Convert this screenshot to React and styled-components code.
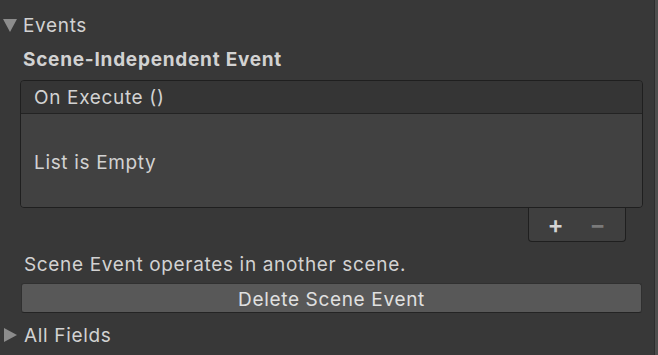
import React from "react";
import styled, { createGlobalStyle } from "styled-components";

const GlobalStyle = createGlobalStyle`
    html, body {
        margin: 0;
        padding: 0;
        background: #383838;
    }
    body {
        font-family: Inter, "Noto Sans", "Liberation Sans", sans-serif;
        font-size: 19px;
        letter-spacing: 0.66px;
        color: #d2d2d2;
    }
`

// inspector-like panel, dark skin
const Inspector = styled.div`
    display: flex;
    width: 658px;
    height: 355px;
    overflow: hidden;
    background: #383838;
`

const Content = styled.div`
    flex: 1;
    display: flex;
    flex-direction: column;
`

const ScrollEdge = styled.div`
    width: 3px;
    border-left: 1px solid #2e2e2e;
    background: #4e4e4e;
`

const FoldoutRow = styled.div`
    display: flex;
    align-items: center;
    height: 22px;
    margin-top: ${props => props.top}px;
    padding-left: 3px;
`

const Arrow = styled.span`
    width: 0;
    height: 0;
    margin-right: 6px;
    ${props => props.open ? `
        border-left: 7px solid transparent;
        border-right: 7px solid transparent;
        border-top: 13px solid #8c8c8c;
        margin-top: 1px;
    ` : `
        margin-left: 1px;
        margin-right: 7px;
        border-top: 7px solid transparent;
        border-bottom: 7px solid transparent;
        border-left: 13px solid #8c8c8c;
    `}
`

const Heading = styled.div`
    height: 22px;
    line-height: 22px;
    margin-top: 13px;
    padding-left: 23px;
    font-weight: 700;
    letter-spacing: 0.75px;
`

const EventBox = styled.div`
    margin: 9px 11px 0 20px;
    border: 1px solid #1f1f1f;
    border-radius: 4px;
    overflow: hidden;
`

const EventHeader = styled.div`
    height: 32px;
    line-height: 33px;
    padding-left: 13px;
    background: #353535;
    border-bottom: 1px solid #232323;
`

const EventBody = styled.div`
    height: 93px;
    display: flex;
    align-items: center;
    padding: 3px 0 0 13px;
    box-sizing: border-box;
    background: #414141;
`

const FooterWrap = styled.div`
    display: flex;
    justify-content: flex-end;
    margin-right: 28px;
`

const Footer = styled.div`
    display: flex;
    align-items: center;
    justify-content: space-around;
    width: 98px;
    height: 34px;
    padding: 0 6px;
    box-sizing: border-box;
    background: #3f3f3f;
    border: 1px solid #1f1f1f;
    border-top: none;
    border-radius: 0 0 4px 4px;
`

const FooterButton = styled.span`
    font-size: 24px;
    font-weight: 600;
    line-height: 1;
    color: ${props => props.disabled ? "#7a7a7a" : "#d4d4d4"};
`

const Note = styled.div`
    height: 22px;
    line-height: 22px;
    margin-top: 12px;
    padding-left: 24px;
`

const Button = styled.div`
    margin: 7px 12px 0 21px;
    height: 28px;
    line-height: 31px;
    text-align: center;
    background: #585858;
    border: 1px solid #303030;
    border-bottom-color: #242424;
    border-radius: 3px;
    color: #e0e0e0;
`

const App = () => {
    return (
        <React.Fragment>
            <GlobalStyle/>
            <Inspector>
                <Content>
                    <FoldoutRow top={14}>
                        <Arrow open/>
                        Events
                    </FoldoutRow>
                    <Heading>Scene-Independent Event</Heading>
                    <EventBox>
                        <EventHeader>On Execute ()</EventHeader>
                        <EventBody>List is Empty</EventBody>
                    </EventBox>
                    <FooterWrap>
                        <Footer>
                            <FooterButton>+</FooterButton>
                            <FooterButton disabled>−</FooterButton>
                        </Footer>
                    </FooterWrap>
                    <Note>Scene Event operates in another scene.</Note>
                    <Button>Delete Scene Event</Button>
                    <FoldoutRow top={11}>
                        <Arrow/>
                        All Fields
                    </FoldoutRow>
                </Content>
                <ScrollEdge/>
            </Inspector>
        </React.Fragment>
    );
}

export default App;
